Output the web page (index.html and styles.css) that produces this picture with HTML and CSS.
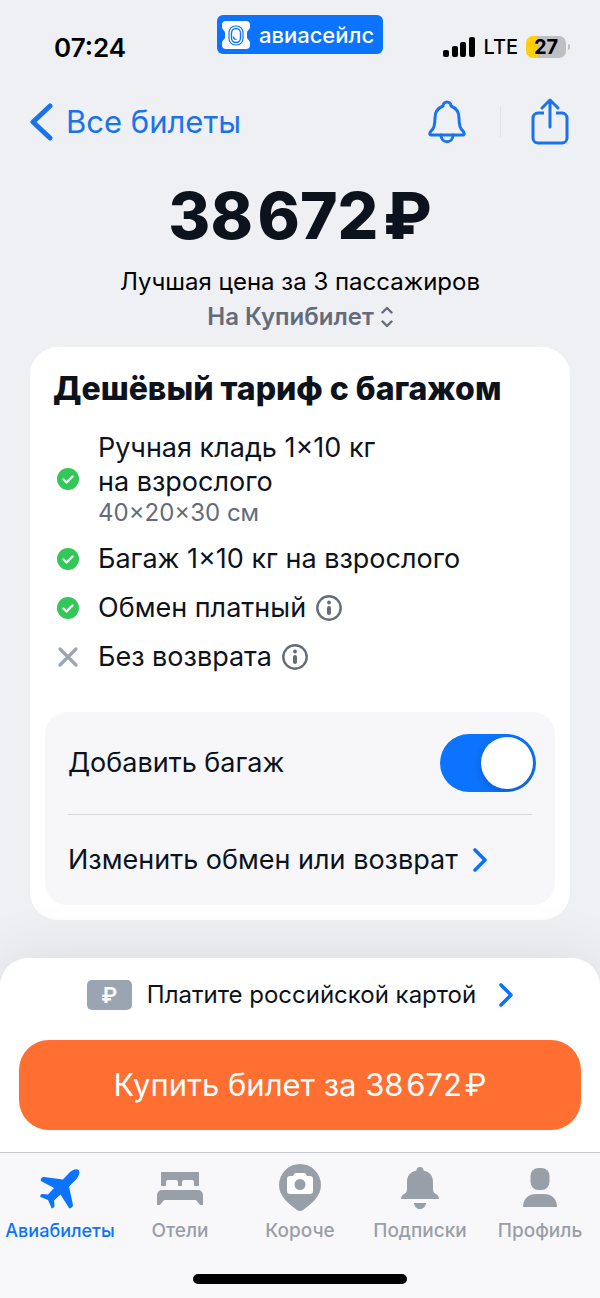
FILE: index.html
```html
<!DOCTYPE html>
<html lang="ru">
<head>
<meta charset="UTF-8">
<meta name="viewport" content="width=device-width, initial-scale=1.0">
<title>Авиасейлс</title>
<link rel="stylesheet" href="styles.css">
</head>
<body>
  <div class="status-bar">
    <span class="time">07:24</span>
    <div class="brand">
      <svg width="28" height="28" viewBox="0 0 28 28">
        <path fill="#fff" d="M4 0h20a4 4 0 0 1 4 4v2c0 3-3 3-3 6v4c0 3 3 3 3 6v2a4 4 0 0 1-4 4H4a4 4 0 0 1-4-4v-2c0-3 3-3 3-6v-4C3 9 0 9 0 6V4a4 4 0 0 1 4-4z"/>
        <rect x="7" y="5" width="14" height="19" rx="6.500" fill="#fff" stroke="#0c73fe" stroke-width="1.200"/>
        <rect x="9.500" y="7.500" width="9" height="14" rx="4.500" fill="#fff" stroke="#0c73fe" stroke-width="1.400"/>
        <path d="M11.500 15.500a3 3 0 0 0 3 3" fill="none" stroke="#0c73fe" stroke-width="1.200"/>
      </svg>
      <span>авиасейлс</span>
    </div>
    <div class="signal">
      <svg width="32" height="20" viewBox="0 0 32 20">
        <rect x="0" y="13" width="6" height="7" rx="2"/>
        <rect x="9" y="9" width="6" height="11" rx="2"/>
        <rect x="17" y="5" width="6" height="15" rx="2"/>
        <rect x="26" y="0" width="6" height="20" rx="2"/>
      </svg>
      <span class="network">LTE</span>
      <span class="battery">27</span>
    </div>
  </div>

  <header class="nav">
    <a href="#" class="back">
      <svg width="24" height="38" viewBox="0 0 24 38" fill="none" stroke="#1a73ee" stroke-width="5" stroke-linecap="round" stroke-linejoin="round"><path d="M20 3 3 19l17 16"/></svg>
      Все билеты
    </a>
    <div class="nav-actions">
      <button type="button" class="bell" aria-label="Уведомления">
        <svg width="38" height="44" viewBox="0 0 38 44" fill="none" stroke="#1a73ee" stroke-width="3" stroke-linecap="round" stroke-linejoin="round"><path d="M15 6a4 4 0 0 1 8 0c5 2 8 6 8 12 0 7 1 11 4 13 1 1 2 4 0 4H3c-2 0-1-3 0-4 3-2 4-6 4-13 0-6 3-10 8-12z"/><path d="M13 35c0 9 12 9 12 0"/></svg>
      </button>
      <span class="nav-divider"></span>
      <button type="button" aria-label="Поделиться">
        <svg width="38" height="48" viewBox="0 1 38 48" fill="none" stroke="#1a73ee" stroke-width="3" stroke-linecap="round" stroke-linejoin="round"><path stroke-linecap="butt" d="M13 16H7a5 5 0 0 0-5 5v20a5 5 0 0 0 5 5h24a5 5 0 0 0 5-5V21a5 5 0 0 0-5-5h-6"/><path d="M19 30V3M11 11l8-8 8 8"/></svg>
      </button>
    </div>
  </header>

  <main class="ticket">
    <h1 class="price">38&#8202;672&#8202;₽</h1>
    <p class="price-note">Лучшая цена за 3 пассажиров</p>
    <button type="button" class="agency">
      На Купибилет
      <svg width="12" height="22" viewBox="0 0 12 22" fill="none" stroke="#646b7a" stroke-width="2.400" stroke-linecap="round" stroke-linejoin="round"><path d="M1.500 6.500 6 2l4.500 4.500M1.500 15.500 6 20l4.500-4.500"/></svg>
    </button>

    <section class="card">
      <h2 class="card-title">Дешёвый тариф с багажом</h2>
      <ul class="features">
        <li class="feature">
          <svg class="mark" viewBox="0 0 22 22"><circle cx="11" cy="11" r="11" fill="#33c75a"/><path d="M6.500 11.500l3 3 6-6" fill="none" stroke="#fff" stroke-width="2.400" stroke-linecap="round" stroke-linejoin="round"/></svg>
          <div>Ручная кладь 1×10 кг<br>на взрослого<small class="size">40×20×30 см</small></div>
        </li>
        <li class="feature">
          <svg class="mark" viewBox="0 0 22 22"><circle cx="11" cy="11" r="11" fill="#33c75a"/><path d="M6.500 11.500l3 3 6-6" fill="none" stroke="#fff" stroke-width="2.400" stroke-linecap="round" stroke-linejoin="round"/></svg>
          <div>Багаж 1×10 кг на взрослого</div>
        </li>
        <li class="feature">
          <svg class="mark" viewBox="0 0 22 22"><circle cx="11" cy="11" r="11" fill="#33c75a"/><path d="M6.500 11.500l3 3 6-6" fill="none" stroke="#fff" stroke-width="2.400" stroke-linecap="round" stroke-linejoin="round"/></svg>
          <div>Обмен платный</div>
          <button type="button" class="info" aria-label="Подробнее об обмене">
            <svg width="26" height="26" viewBox="0 0 26 26"><circle cx="13" cy="13" r="11.700" fill="none" stroke="#646b7a" stroke-width="2.400"/><circle cx="13" cy="7.500" r="1.900" fill="#646b7a"/><path d="M13 13v5" stroke="#646b7a" stroke-width="4" stroke-linecap="round"/></svg>
          </button>
        </li>
        <li class="feature">
          <svg class="mark" viewBox="0 0 22 22"><path d="M3 3l16 16M19 3 3 19" stroke="#9ba5b2" stroke-width="3.200" stroke-linecap="round"/></svg>
          <div>Без возврата</div>
          <button type="button" class="info" aria-label="Подробнее о возврате">
            <svg width="26" height="26" viewBox="0 0 26 26"><circle cx="13" cy="13" r="11.700" fill="none" stroke="#646b7a" stroke-width="2.400"/><circle cx="13" cy="7.500" r="1.900" fill="#646b7a"/><path d="M13 13v5" stroke="#646b7a" stroke-width="4" stroke-linecap="round"/></svg>
          </button>
        </li>
      </ul>
      <div class="options">
        <div class="option">
          <label for="baggage">Добавить багаж</label>
          <input type="checkbox" id="baggage" class="toggle" checked>
        </div>
        <a href="#" class="option-link">
          Изменить обмен или возврат
          <svg width="14" height="24" viewBox="0 0 14 24" fill="none" stroke="#0c73fe" stroke-width="3.600" stroke-linecap="round" stroke-linejoin="round"><path d="M2 2l10 10L2 22"/></svg>
        </a>
      </div>
    </section>
  </main>

  <div class="bottom">
    <div class="buy">
      <a href="#" class="pay-link">
        <span class="card-badge">₽</span>
        Платите российской картой
        <svg width="14" height="24" viewBox="0 0 14 24" fill="none" stroke="#0c73fe" stroke-width="3.600" stroke-linecap="round" stroke-linejoin="round"><path d="M2 2l10 10L2 22"/></svg>
      </a>
      <button type="button" class="buy-button">Купить билет за 38&#8202;672&#8202;₽</button>
    </div>
    <nav class="tabs">
      <a href="#" class="tab active">
        <svg width="48" height="48" viewBox="0 0 48 48"><path fill="currentColor" d="M42.500 6c2 2 .5 6.500-3 10L33 22.500 37 41c0 2-2.500 4-4 3l-8.500-13.500-6.500 6 .5 5.500c0 1.500-2 3-3 2l-3.500-8-7.500-3c-1-1 .5-3 2-3l5.500.5 6-6.500-13-7c-1-1.500 1-4 3-4L27 15.500 33 9c3-3 7.500-5 9.500-3z"/></svg>
        Авиабилеты
      </a>
      <a href="#" class="tab">
        <svg width="48" height="48" viewBox="0 0 48 48"><path fill="currentColor" d="M5 8h38v14h-5v-4a2 2 0 0 0-2-2h-8a2 2 0 0 0-2 2v4h-4v-4a2 2 0 0 0-2-2h-8a2 2 0 0 0-2 2v4H5zM6 26h36a5 5 0 0 1 5 5v10h-3l-4-5H8l-4 5H1V31a5 5 0 0 1 5-5z"/></svg>
        Отели
      </a>
      <a href="#" class="tab">
        <svg width="48" height="48" viewBox="0 0 48 48"><path fill="currentColor" d="M24 0a21 21 0 0 1 21 21c0 10-8 18-18 25q-3 2-6 0C11 39 3 31 3 21A21 21 0 0 1 24 0z"/><path fill="#fff" d="M14 12h3l2-3h10l2 3h3a3 3 0 0 1 3 3v12a3 3 0 0 1-3 3H14a3 3 0 0 1-3-3V15a3 3 0 0 1 3-3z"/><circle cx="24" cy="20.500" r="5.500" fill="currentColor"/></svg>
        Короче
      </a>
      <a href="#" class="tab">
        <svg width="48" height="48" viewBox="0 0 48 48"><path fill="currentColor" d="M20.500 6.500a3.500 3.500 0 0 1 7 0C34 8 37 12 37 18v7c0 3 1 4 3 5s3 3 3 5H5c0-2 1-4 3-5s3-2 3-5v-7c0-6 3-10 9.500-11.500zM18 39h12c-1 8-11 8-12 0z"/></svg>
        Подписки
      </a>
      <a href="#" class="tab">
        <svg width="48" height="48" viewBox="0 0 48 48"><rect x="14.500" y="4" width="19" height="22" rx="8" fill="currentColor"/><path fill="currentColor" d="M7 43c0-9 6-13 13-13h8c7 0 13 4 13 13z"/></svg>
        Профиль
      </a>
    </nav>
    <div class="home-indicator"></div>
  </div>
</body>
</html>
```

FILE: styles.css
```css
* {
  box-sizing: border-box;
}

body {
  margin: 0;
  min-height: 100vh;
  display: flex;
  flex-direction: column;
  background-color: #eff0f4;
  color: #0d131d;
  font-family: Inter, "Liberation Sans", sans-serif;
  font-size: 27px;
  line-height: 34px;
}

a {
  color: inherit;
  text-decoration: none;
}

button {
  padding: 0;
  border: none;
  background: none;
  color: inherit;
  font: inherit;
  cursor: pointer;
}

svg {
  display: block;
  flex-shrink: 0;
}

.status-bar {
  display: grid;
  grid-template-columns: 1fr auto 1fr;
  align-items: start;
  padding-top: 15px;
  height: 84px;
  color: #000;
}

.time {
  padding: 16px 0 0 54px;
  font-size: 26px;
  font-weight: 600;
}

.brand {
  display: flex;
  align-items: center;
  gap: 9px;
  height: 39px;
  padding: 0 9px 0 5px;
  border-radius: 6px;
  background-color: #0c73fe;
  color: #fff;
  font-size: 22px;
  font-weight: 500;
}

.signal {
  display: flex;
  align-items: center;
  justify-content: flex-end;
  gap: 8px;
  padding: 15px 34px 0 0;
}

.network {
  font-size: 20px;
  font-weight: 500;
}

.battery {
  position: relative;
  width: 40px;
  border-radius: 7px;
  background: linear-gradient(to right, #ffd00a 28%, #bfbfc2 28%);
  font-size: 20px;
  line-height: 22px;
  font-weight: 700;
  text-align: center;
}

.battery::after {
  content: "";
  position: absolute;
  top: 8px;
  right: -4px;
  width: 2px;
  height: 6px;
  border-radius: 0 2px 2px 0;
  background-color: #bfbfc2;
}

.nav {
  display: flex;
  align-items: center;
  justify-content: space-between;
  height: 76px;
  padding: 0 31px 0 30px;
  color: #1a73ee;
}

.back {
  display: flex;
  align-items: center;
  gap: 12px;
  font-size: 31px;
}

.nav-actions {
  display: flex;
  align-items: center;
  gap: 30px;
}

.bell {
  margin-right: 4px;
}

.nav-divider {
  width: 1px;
  height: 30px;
  background-color: #e0e1e6;
}

.ticket {
  display: flex;
  flex-direction: column;
  align-items: center;
  flex-grow: 1;
  padding: 16px 30px 38px;
}

.price {
  margin: 0;
  font-size: 64px;
  line-height: 80px;
  font-weight: 800;
}

.price-note {
  margin: 9px 0 0;
  color: #000;
  font-size: 24px;
}

.agency {
  display: flex;
  align-items: center;
  gap: 7px;
  margin-top: 1px;
  color: #646b7a;
  font-size: 24px;
  font-weight: 600;
}

.card {
  align-self: stretch;
  margin-top: 13px;
  padding: 22px 15px 15px;
  border-radius: 28px;
  background-color: #fff;
}

.card-title {
  margin: 0 8px;
  font-size: 32px;
  line-height: 40px;
  font-weight: 800;
}

.features {
  display: flex;
  flex-direction: column;
  gap: 15px;
  margin: 22px 12px 38px;
  padding: 0;
  list-style: none;
}

.feature {
  display: flex;
  align-items: center;
}

.mark {
  width: 22px;
  height: 22px;
  margin-right: 19px;
}

.size {
  display: block;
  color: #646b7a;
  font-size: 24px;
  line-height: 28px;
}

.info {
  margin-left: 10px;
}

.options {
  padding: 0 23px;
  border-radius: 22px;
  background-color: #f7f7f9;
}

.option {
  display: flex;
  align-items: center;
  justify-content: space-between;
  height: 103px;
  border-bottom: 1px solid #d8d9de;
}

.toggle {
  appearance: none;
  width: 96px;
  height: 58px;
  margin: 0 -4px 0 0;
  padding: 3px;
  border-radius: 29px;
  background-color: #b9bec8;
  cursor: pointer;
  overflow: hidden;
}

.toggle::before {
  content: "";
  display: block;
  width: 52px;
  height: 52px;
  border-radius: 50%;
  background-color: #fff;
  box-shadow: 0 3px 8px rgba(0, 0, 0, 0.2);
}

.toggle:checked {
  background-color: #0c73fe;
}

.toggle:checked::before {
  margin-left: auto;
}

.option-link {
  display: flex;
  align-items: center;
  gap: 15px;
  height: 90px;
}

.buy {
  padding: 20px 19px 22px;
  border-radius: 28px 28px 0 0;
  background-color: #fff;
  box-shadow: 0 -4px 60px rgba(0, 0, 0, 0.08);
}

.pay-link {
  display: flex;
  align-items: center;
  justify-content: center;
  gap: 15px;
  font-size: 24px;
}

.pay-link svg {
  margin-left: 8px;
}

.card-badge {
  width: 45px;
  border-radius: 5px;
  background-color: #9ba5b2;
  color: #fff;
  font-size: 22px;
  line-height: 30px;
  font-weight: 600;
  text-align: center;
}

.buy-button {
  width: 100%;
  height: 90px;
  margin-top: 28px;
  border-radius: 30px;
  background-color: #ff6f32;
  color: #fff;
  font-size: 31px;
}

.tabs {
  display: flex;
  height: 122px;
  padding-top: 11px;
  border-top: 1px solid #c6c8cd;
  background-color: #f8f8fa;
}

.tab {
  display: flex;
  flex: 1 1 0;
  flex-direction: column;
  align-items: center;
  gap: 7px;
  color: #999fa8;
  font-size: 19px;
  line-height: 24px;
  font-weight: 500;
}

.tab.active {
  color: #0c73fe;
  font-size: 18px;
}

.home-indicator {
  padding-bottom: 14px;
  background-color: #f8f8fa;
}

.home-indicator::before {
  content: "";
  display: block;
  width: 214px;
  height: 10px;
  margin: 0 auto;
  border-radius: 5px;
  background-color: #000;
}
```
